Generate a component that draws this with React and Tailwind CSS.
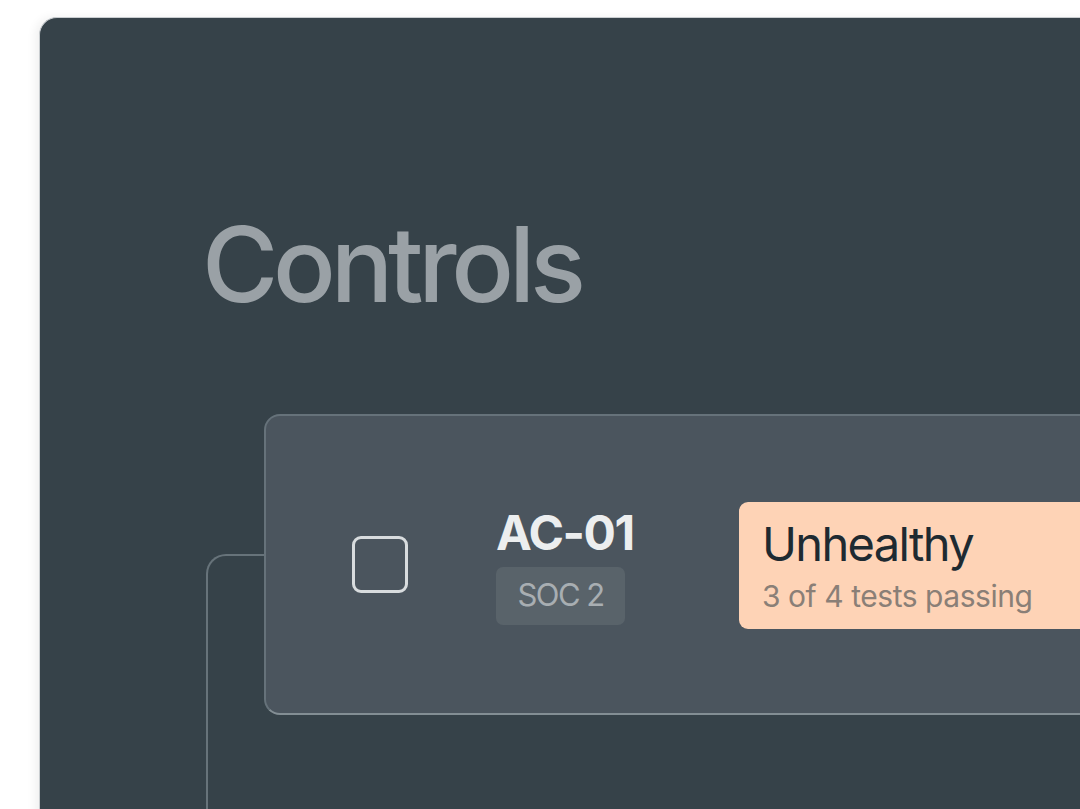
import React from "react";

const font = { fontFamily: "Inter, 'Noto Sans', sans-serif" };

// Checkbox square in the row
const Checkbox = () => (
  <div className="w-[56px] h-[57px] shrink-0 rounded-[9px] border-[3px] border-[#d8dcde]" />
);

const ControlRow = () => (
  <div className="flex items-center w-[900px] h-[301px] shrink-0 rounded-[16px] bg-[#4b555e] border-2 border-[#66727a] border-b-[#838e94] pl-[86px]">
    <Checkbox />
    {/* id + framework */}
    <div className="ml-[88px] w-[243px] shrink-0 flex flex-col items-start">
      <div className="text-[48px] leading-[56px] font-bold tracking-[-0.03em] text-[#eceeef]">AC-01</div>
      <div className="mt-[6px] h-[58px] w-[129px] rounded-[7px] bg-[#59636a] flex items-center justify-center text-[31px] tracking-[-0.05em] text-[#a8aeb2]">
        SOC 2
      </div>
    </div>
    {/* status */}
    <div className="mt-[2px] h-[127px] flex-1 rounded-l-[9px] bg-[#fed3b6] pl-[23px] pt-[14px]">
      <div className="text-[47px] leading-[56px] tracking-[-0.035em] text-[#1e2a31]">Unhealthy</div>
      <div className="mt-[6px] text-[30px] leading-[36px] tracking-[-0.015em] text-[#8a7f77]">3 of 4 tests passing</div>
    </div>
  </div>
);

export default function App() {
  return (
    <div className="w-[1080px] h-[809px] overflow-hidden bg-white pl-[39px] pt-[17px]" style={font}>
      <div className="w-[1200px] h-[900px] rounded-tl-[18px] bg-[#364249] border-l border-t border-[#c9cdd0] shadow-[-4px_0_10px_rgba(0,0,0,0.06)] pl-[164px] pt-[186px]">
        <h1 className="-ml-[2px] text-[104px] leading-[120px] font-medium tracking-[-0.05em] text-[#9aa1a6]">Controls</h1>
        <div className="flex mt-[90px] pl-[2px]">
          {/* connector line behind the row */}
          <div className="w-[60px] shrink-0 mt-[140px] h-[400px] border-l-2 border-t-2 border-[#67737a] rounded-tl-[20px] -mr-[2px]" />
          <ControlRow />
        </div>
      </div>
    </div>
  );
}
